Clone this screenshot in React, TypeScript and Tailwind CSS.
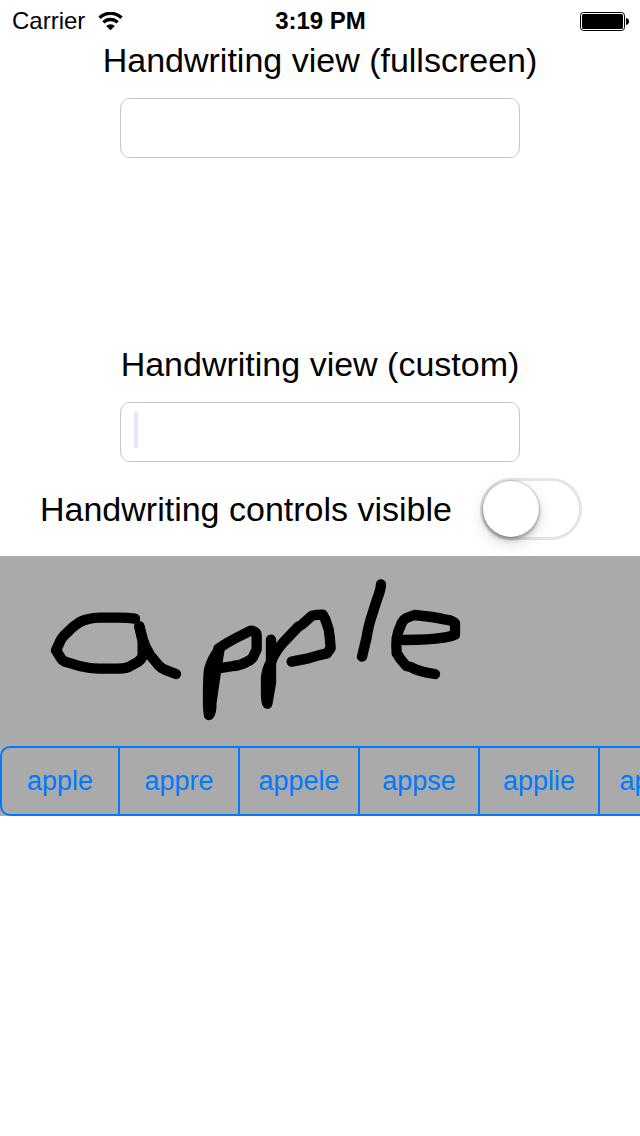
import { useState } from "react";

const candidates = ["apple", "appre", "appele", "appse", "applie", "appeal"];

function StatusBar() {
  return (
    <header className="grid h-10 grid-cols-3 items-center pt-0.5 pr-[11px] pl-3 text-2xl">
      <div className="flex items-center gap-[13px]">
        <span>Carrier</span>
        <svg viewBox="0 0 25 19" className="h-[19px] w-[25px]" fill="none" stroke="black" aria-label="Wi-Fi">
          <path d="M1.5 5.800a15.800 15.800 0 0 1 22 0" strokeWidth="3.500" />
          <path d="M5.400 10.400a10.200 10.200 0 0 1 14.200 0" strokeWidth="3.300" />
          <path d="M8.200 14a6.200 6.200 0 0 1 8.600 0l-4.300 4.200z" fill="black" stroke="none" />
        </svg>
      </div>
      <time className="text-center font-bold whitespace-nowrap">3:19 PM</time>
      <svg viewBox="0 0 49 19" className="h-[19px] w-[49px] justify-self-end" aria-label="Battery full">
        <rect x="0.5" y="0.5" width="44" height="18" rx="3" fill="white" stroke="black" />
        <rect x="2" y="2" width="41" height="15" rx="1.5" fill="black" />
        <path d="M46 6c2 .3 3 1.600 3 3.500s-1 3.200-3 3.500z" fill="black" />
      </svg>
    </header>
  );
}

function Ink() {
  return (
    <svg
      viewBox="0 0 1920 570"
      preserveAspectRatio="xMinYMin meet"
      className="h-[190px] w-[640px] max-w-full"
      fill="none"
      stroke="black"
      strokeWidth="31"
      strokeLinecap="round"
      strokeLinejoin="round"
      aria-label="Handwritten ink"
    >
      <g transform="translate(90 12)">
        <path d="M315 176Q295 173 270 173H210Q172 174 148 187Q130 198 112 217Q92 235 88 250L78 271L91 292Q98 305 115 308L152 319Q180 326 205 326H265Q290 326 300 319L322 307Q337 297 338 285V245L328 199" />
        <path d="M328 199L339 240Q345 260 360 285L385 315Q393 324 404 329L438 342" />
        <path d="M569 266Q545 297 537 330Q534 355 534 420Q534 448 537 465Q545 455 544 430L560 320Z" fill="black" />
        <path d="M565 266Q590 248 618 234L662 212Q680 213 680 228V268L668 293Q662 301 651 305Q632 316 610 318L565 325" />
      </g>
      <g transform="translate(720 12)">
        <path d="M93 239V368L82 431Q78 425 78 395V355Q79 330 94 304Z" fill="black" />
        <path d="M94 304Q105 275 130 247L175 200Q185 195 190 190L216 167Q228 164 248 164Q256 176 260 190Q268 208 269 230L272 264L261 280Q235 285 205 295L155 305" />
        <path d="M423 73Q422 90 412 115L396 165Q384 202 380 232L366 290" />
        <path d="M492 240Q570 240 610 233Q635 229 645 224V190Q640 182 618 179Q580 170 523 165L499 174Q488 180 483 194Q473 215 470 235Q468 255 470 280Q480 298 499 318L512 321Q536 335 585 342" />
      </g>
    </svg>
  );
}

export default function App() {
  const [fullscreen, setFullscreen] = useState("");
  const [custom, setCustom] = useState("");
  const field =
    "h-[60px] w-full rounded-[10px] border border-[#c7c7c7] bg-white px-3 text-3xl outline-none";

  return (
    <div className="min-h-screen bg-white font-['Liberation_Sans',Arial,sans-serif] text-black">
      <StatusBar />
      <main>
        <section className="mx-auto flex max-w-[440px] flex-col items-center px-5 text-center">
          <label htmlFor="fullscreen" className="text-[34px] leading-10 whitespace-nowrap">
            Handwriting view (fullscreen)
          </label>
          <input
            id="fullscreen"
            value={fullscreen}
            onChange={(e) => setFullscreen(e.target.value)}
            className={`mt-[18px] ${field}`}
          />
        </section>

        <section className="mx-auto mt-[186px] flex max-w-[440px] flex-col items-center px-5 text-center">
          <label htmlFor="custom" className="text-[34px] leading-10 whitespace-nowrap">
            Handwriting view (custom)
          </label>
          <div className="relative mt-[18px] w-full">
            <input
              id="custom"
              value={custom}
              onChange={(e) => setCustom(e.target.value)}
              className={`block ${field}`}
            />
            {custom === "" && (
              <span className="pointer-events-none absolute top-[10px] left-[14px] h-9 w-1 bg-[#e0e8fc]" />
            )}
          </div>
        </section>

        <div className="mt-4 flex items-center gap-7 px-10">
          <label htmlFor="controls" className="text-[34px] leading-10 whitespace-nowrap">
            Handwriting controls visible
          </label>
          <input
            id="controls"
            type="checkbox"
            role="switch"
            className="flex h-[62px] w-[102px] shrink-0 cursor-pointer appearance-none items-center rounded-full border-[3px] border-[#e5e5e5] bg-white before:h-14 before:w-14 before:rounded-full before:bg-white before:shadow-[0_0_2px_rgba(0,0,0,0.4),0_3px_4px_rgba(0,0,0,0.3),0_6px_16px_rgba(0,0,0,0.15)] checked:border-[#4cd964] checked:bg-[#4cd964] checked:before:ml-10"
          />
        </div>

        <section className="mt-4 flex flex-col overflow-hidden bg-[#aaaaaa]">
          <Ink />
          <div className="flex h-[70px] w-[722px] rounded-[10px] border-2 border-[#007aff]">
            {candidates.map((word, i) => (
              <button
                key={word}
                type="button"
                onClick={() => setCustom(word)}
                className={`shrink-0 border-[#007aff] text-[27px] text-[#007aff] ${i === 0 ? "w-[118px]" : "w-[120px]"} ${i < candidates.length - 1 ? "border-r-2" : ""}`}
              >
                {word}
              </button>
            ))}
          </div>
        </section>
      </main>
    </div>
  );
}
